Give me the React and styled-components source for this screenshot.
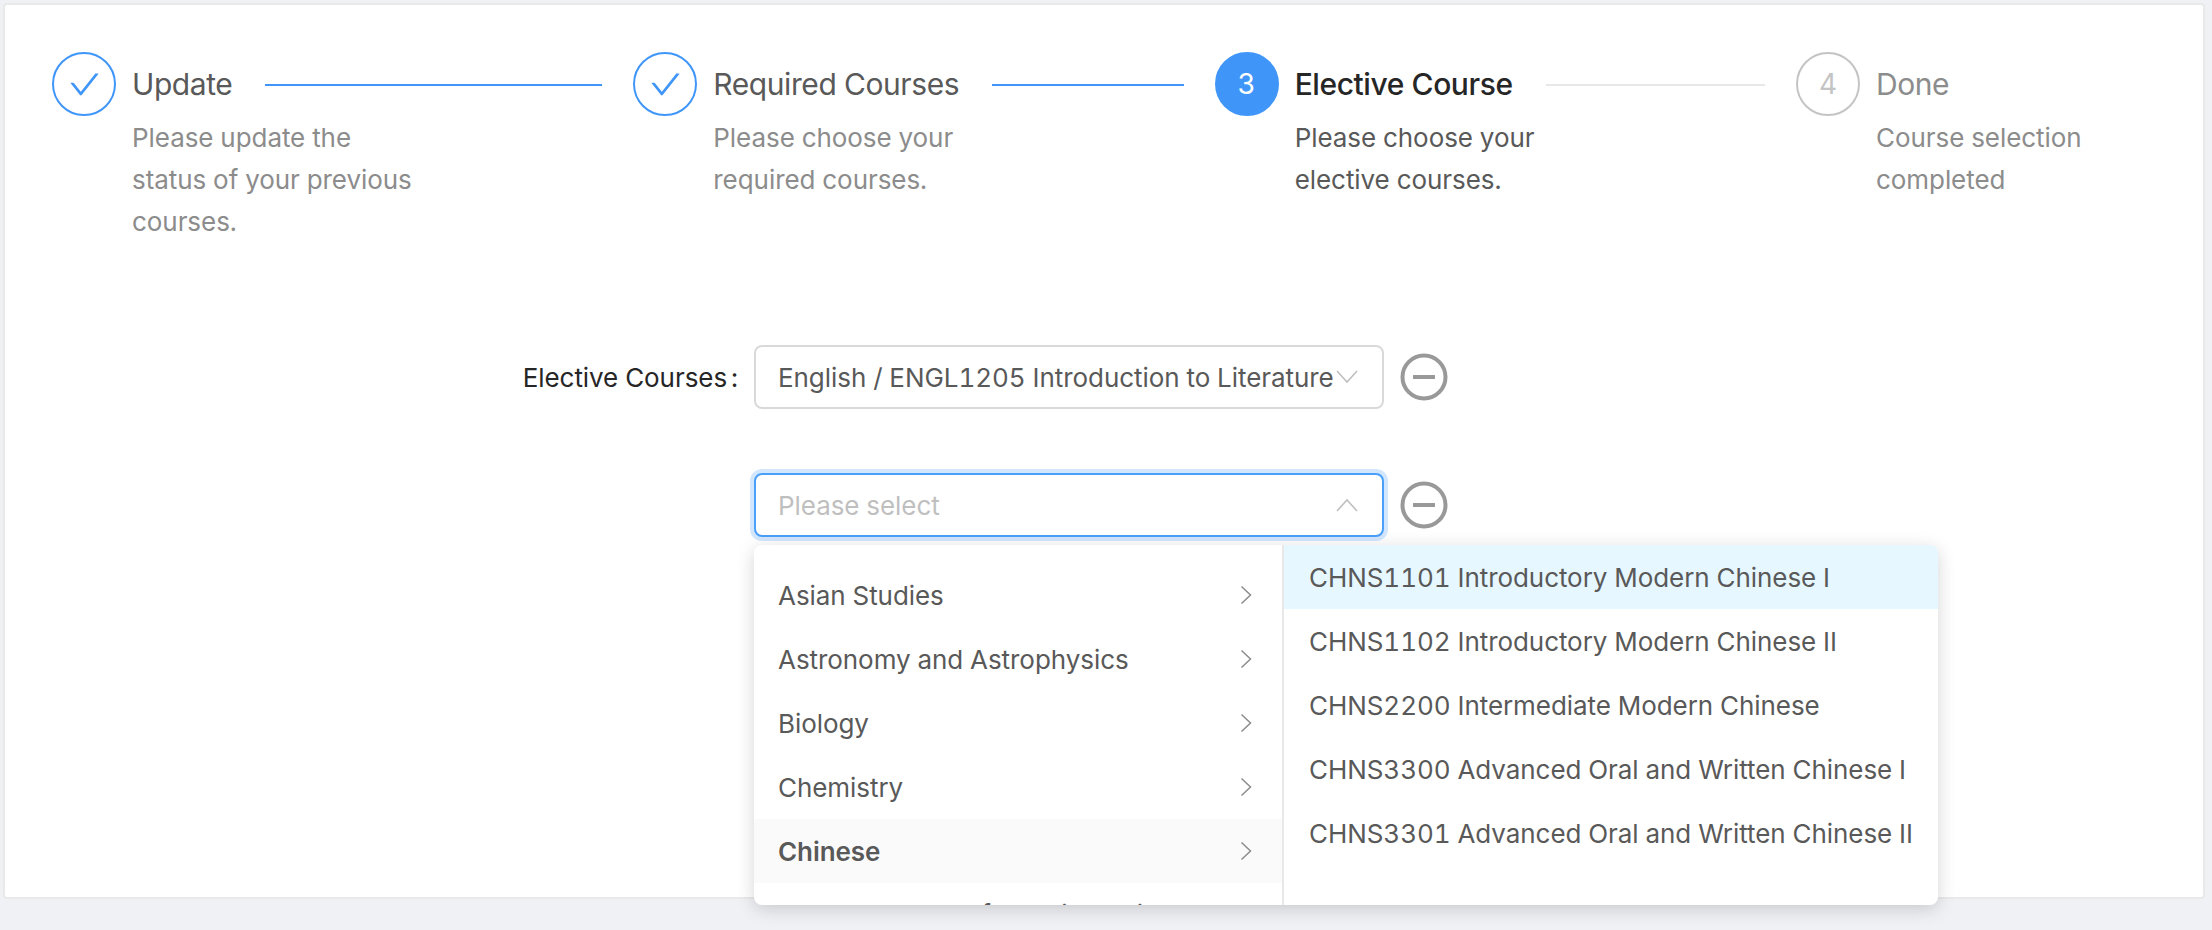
import React from 'react';
import styled, { createGlobalStyle } from 'styled-components';

const GlobalStyle = createGlobalStyle`
  html, body {
    margin: 0;
    height: 930px;
    overflow: hidden;
    background: #f0f1f5;
  }
  body {
    font-family: Inter, "Liberation Sans", sans-serif;
    font-variant-numeric: tabular-nums;
    -webkit-font-smoothing: antialiased;
  }
  * { box-sizing: border-box; }
`;

const Page = styled.div`
  padding: 3px 7px 0 3px;
`;

const Card = styled.div`
  height: 896px;
  background: #fff;
  border: 2px solid #e9e9e9;
  border-radius: 4px;
  padding: 47px 47px 0;
`;

const Steps = styled.div`
  display: flex;
`;

const Step = styled.div`
  display: flex;
  flex: ${p => (p.$last ? 'none' : '1 1 0')};
`;

const StepIcon = styled.div`
  flex: none;
  width: 64px;
  height: 64px;
  margin-right: 16px;
  border-radius: 50%;
  display: flex;
  align-items: center;
  justify-content: center;
  font-size: 28px;
  border: 2px solid ${p => (p.$status === 'wait' ? '#c4c4c4' : '#4096f8')};
  background: ${p => (p.$status === 'process' ? '#4096f8' : '#fff')};
  color: ${p => (p.$status === 'process' ? '#fff' : p.$status === 'wait' ? '#c4c4c4' : '#4096f8')};
`;

const StepBody = styled.div`
  flex: 1;
  min-width: 0;
`;

const StepHead = styled.div`
  display: flex;
  align-items: center;
  height: 64px;
`;

const StepTitle = styled.div`
  font-size: 30px;
  letter-spacing: -0.42px;
  white-space: nowrap;
  font-weight: ${p => (p.$status === 'process' ? 500 : 400)};
  color: ${p => (p.$status === 'process' ? '#262626' : p.$status === 'wait' ? '#8c8c8c' : '#595959')};
`;

const StepLine = styled.div`
  flex: 1;
  height: 2px;
  margin: 2px 31px 0 33px;
  background: ${p => (p.$done ? '#4096f8' : '#e8e8e8')};
`;

const StepDesc = styled.div`
  width: 280px;
  margin-top: 1px;
  font-size: 26px;
  line-height: 42px;
  letter-spacing: -0.06px;
  color: ${p => (p.$status === 'process' ? '#595959' : '#8c8c8c')};
`;

const Form = styled.div`
  margin: 102px 0 0 -47px;
`;

const FormRow = styled.div`
  display: flex;
  align-items: center;
  height: 64px;
  margin-bottom: 64px;
`;

const Label = styled.div`
  flex: 0 0 749px;
  padding-right: 16px;
  text-align: right;
  font-size: 26px;
  letter-spacing: -0.06px;
  color: #262626;
`;

const Colon = styled.span`
  margin-left: 4px;
`;

const SelectWrap = styled.div`
  position: relative;
  flex: 0 0 630px;
`;

const Select = styled.div`
  display: flex;
  align-items: center;
  height: 64px;
  padding: 0 24px 0 22px;
  background: #fff;
  border-radius: 8px;
  border: 2px solid ${p => (p.$open ? '#4a9ff9' : '#d9d9d9')};
  box-shadow: ${p => (p.$open ? '0 0 0 4px #d2e6fd' : 'none')};
`;

const SelectText = styled.div`
  flex: 1;
  min-width: 0;
  white-space: nowrap;
  overflow: hidden;
  font-size: 26px;
  letter-spacing: -0.06px;
  color: ${p => (p.$placeholder ? '#bfbfbf' : '#595959')};
`;

const MinusButton = styled.svg`
  flex: none;
  width: 48px;
  height: 48px;
  margin-left: 16px;
  color: #999;
`;

const Dropdown = styled.div`
  position: absolute;
  top: 72px;
  left: 0;
  display: flex;
  height: 360px;
  background: #fff;
  border-radius: 8px;
  box-shadow: 0 4px 18px rgba(0, 0, 0, 0.17);
  overflow: hidden;
  z-index: 10;
`;

const Menu = styled.ul`
  list-style: none;
  margin: 0;
  height: 360px;
  overflow: hidden;
  width: ${p => p.$width}px;
  padding: ${p => p.$top}px 0 0;
  border-right: ${p => (p.$divided ? '2px solid #e8e8e8' : 'none')};
`;

const MenuItem = styled.li`
  display: flex;
  align-items: center;
  justify-content: space-between;
  height: 64px;
  padding: 0 30px 0 ${p => (p.$selected !== undefined ? 25 : 24)}px;
  font-size: 26px;
  letter-spacing: -0.06px;
  white-space: nowrap;
  color: #595959;
  font-weight: ${p => (p.$active ? 600 : 400)};
  background: ${p => (p.$active ? '#fafafa' : p.$selected ? '#e6f7ff' : 'transparent')};
`;

// the row below the fold shows only the tops of its letters
const ItemLabel = styled.span`
  padding-bottom: ${p => (p.$clipped ? 2 : 0)}px;
`;

const Chevron = styled.svg`
  flex: none;
  width: 12px;
  height: 20px;
`;

const ArrowIcon = styled.svg`
  flex: none;
  width: 22px;
  height: 14px;
`;

const CheckIcon = () => (
  <svg width="35" height="35" viewBox="0 0 1024 1024" fill="currentColor">
    <path d="M912 190h-69.9c-9.8 0-19.1 4.5-25.1 12.2L404.7 724.5 207 474a32 32 0 0 0-25.1-12.2H112c-6.7 0-10.4 7.7-6.3 12.9l273.9 347c12.8 16.2 37.4 16.2 50.3 0l488.4-618.9c4.1-5.1.4-12.8-6.3-12.8z" />
  </svg>
);

const MinusCircle = () => (
  <MinusButton viewBox="0 0 48 48" fill="none" stroke="currentColor" strokeWidth="4">
    <circle cx="24" cy="24" r="21.5" />
    <line x1="13" y1="24" x2="35" y2="24" />
  </MinusButton>
);

const Arrow = ({ up }) => (
  <ArrowIcon viewBox="0 0 22 14" fill="none" stroke="#bfbfbf" strokeWidth="1.6">
    <polyline points={up ? '1,13 11,2 21,13' : '1,1 11,12 21,1'} />
  </ArrowIcon>
);

const steps = [
  { title: 'Update', desc: 'Please update the status of your previous courses.', status: 'finish' },
  { title: 'Required Courses', desc: 'Please choose your required courses.', status: 'finish' },
  { title: 'Elective Course', desc: 'Please choose your elective courses.', status: 'process', num: 3 },
  { title: 'Done', desc: 'Course selection completed', status: 'wait', num: 4 },
];

const subjects = ['Asian Studies', 'Astronomy and Astrophysics', 'Biology', 'Chemistry', 'Chinese', 'Computer and Information Sciences'];

const courses = [
  'CHNS1101 Introductory Modern Chinese I',
  'CHNS1102 Introductory Modern Chinese II',
  'CHNS2200 Intermediate Modern Chinese',
  'CHNS3300 Advanced Oral and Written Chinese I',
  'CHNS3301 Advanced Oral and Written Chinese II',
];

export default function App() {
  return (
    <Page>
      <GlobalStyle />
      <Card>
        <Steps>
          {steps.map((s, i) => {
            const last = i === steps.length - 1;
            return (
              <Step key={s.title} $last={last}>
                <StepIcon $status={s.status}>{s.status === 'finish' ? <CheckIcon /> : s.num}</StepIcon>
                <StepBody>
                  <StepHead>
                    <StepTitle $status={s.status}>{s.title}</StepTitle>
                    {!last && <StepLine $done={s.status === 'finish'} />}
                  </StepHead>
                  <StepDesc $status={s.status}>{s.desc}</StepDesc>
                </StepBody>
              </Step>
            );
          })}
        </Steps>

        <Form>
          <FormRow>
            <Label>Elective Courses<Colon>:</Colon></Label>
            <SelectWrap>
              <Select>
                <SelectText>English / ENGL1205 Introduction to Literature</SelectText>
                <Arrow />
              </Select>
            </SelectWrap>
            <MinusCircle />
          </FormRow>
          <FormRow>
            <Label />
            <SelectWrap>
              <Select $open>
                <SelectText $placeholder>Please select</SelectText>
                <Arrow up />
              </Select>
              <Dropdown>
                <Menu $width={530} $top={18} $divided>
                  {subjects.map((name, i) => (
                    <MenuItem key={name} $active={name === 'Chinese'}>
                      <ItemLabel $clipped={i === subjects.length - 1}>{name}</ItemLabel>
                      <Chevron viewBox="0 0 12 20" fill="none" stroke="#8c8c8c" strokeWidth="1.5">
                        <polyline points="1.5,1.5 10.5,10 1.5,18.5" />
                      </Chevron>
                    </MenuItem>
                  ))}
                </Menu>
                <Menu $width={654} $top={0}>
                  {courses.map((name, i) => (
                    <MenuItem key={name} $selected={i === 0}>{name}</MenuItem>
                  ))}
                </Menu>
              </Dropdown>
            </SelectWrap>
            <MinusCircle />
          </FormRow>
        </Form>
      </Card>
    </Page>
  );
}
